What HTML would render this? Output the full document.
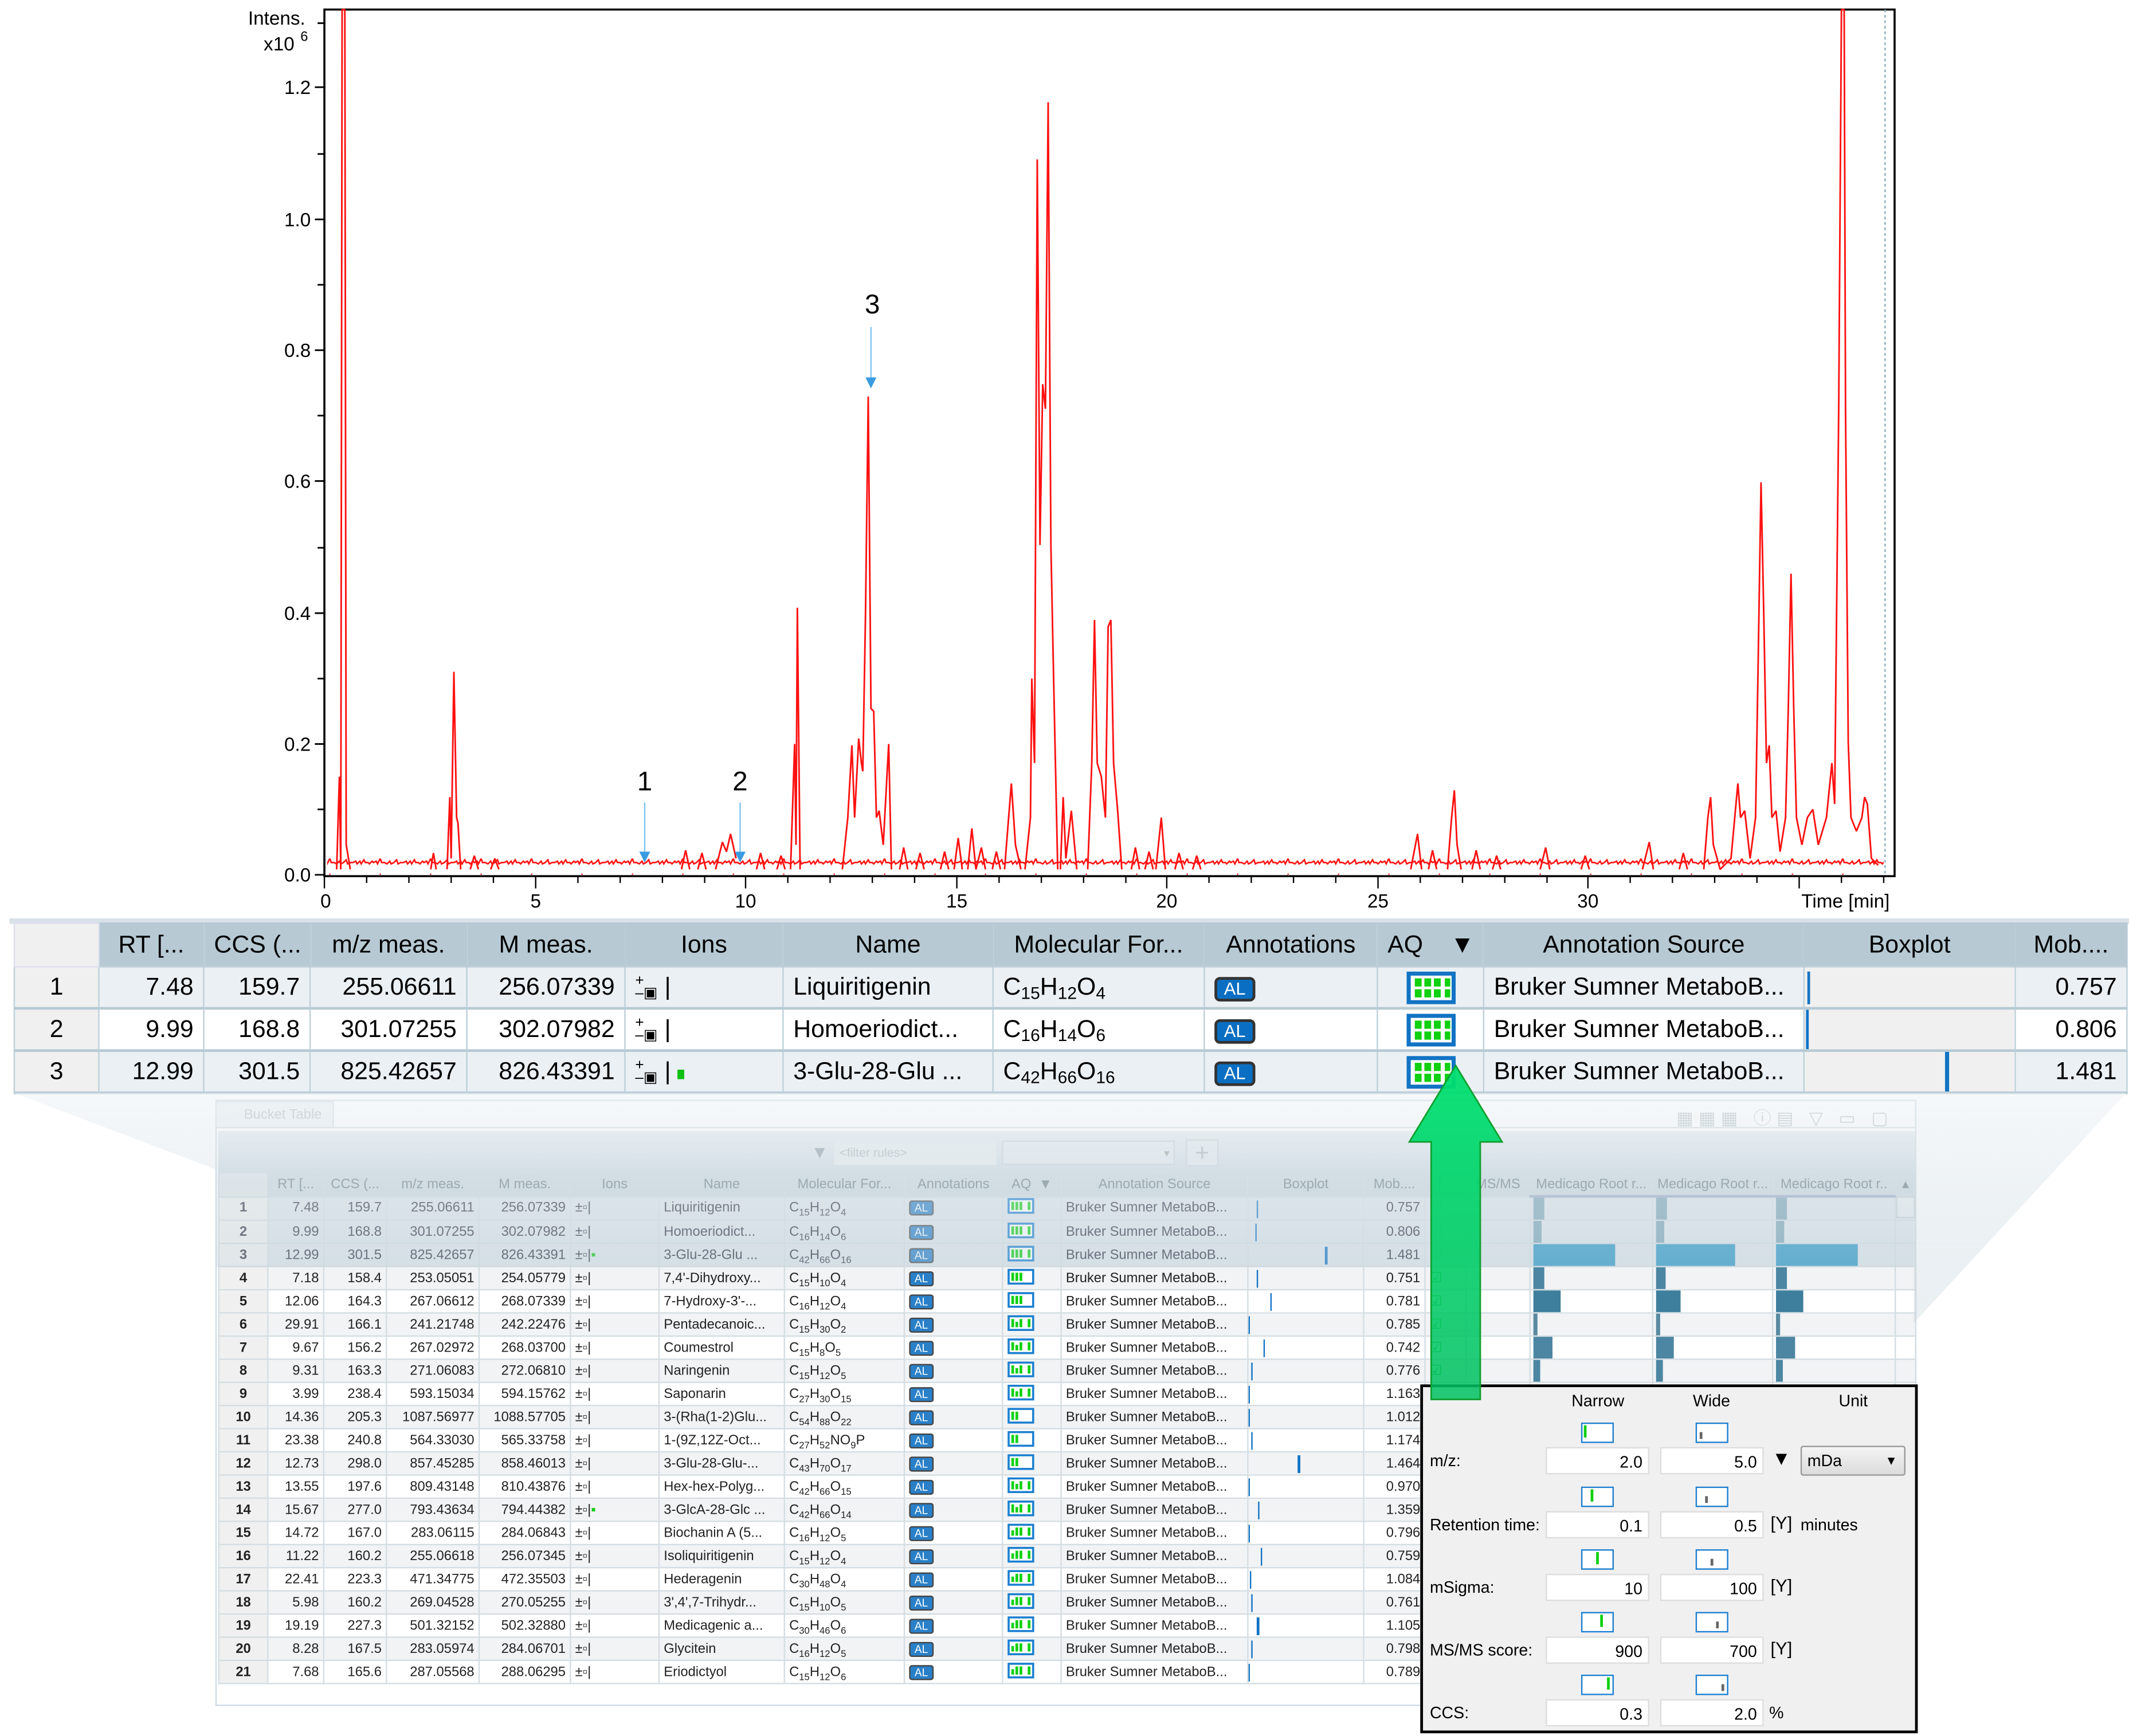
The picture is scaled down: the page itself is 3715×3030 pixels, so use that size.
<!DOCTYPE html>
<html><head><meta charset="utf-8">
<style>
html,body{margin:0;padding:0;background:#fff;}
body{width:3715px;height:3030px;overflow:hidden;}
#s{position:absolute;left:0;top:0;width:1562px;height:1274px;transform:scale(2.3784,2.3783);transform-origin:0 0;font-family:"Liberation Sans",sans-serif;color:#000;}
.abs{position:absolute;}
table{border-collapse:collapse;table-layout:fixed;}
#bt td,#bt th{font-weight:normal;font-size:18px;height:29px;padding:0 7px;border:1px solid #bccfd9;white-space:nowrap;overflow:hidden;}
#bt th{background:#b7cad4;text-align:center;border-color:#b7cad4;height:31px;}
#bt td{text-align:right;border-bottom:2px solid #b7cad4;}
#bt td.l{text-align:left;}
#bt td.c{text-align:center;}
#bt tr.a td{background:#ebf0f4;}
#bt tr.b td{background:#fff;}
#bt td.ix{background:#f0f0f0 !important;text-align:center;}
#bt td.bx{background:#f0f0f0 !important;position:relative;}
sub{font-size:70%;vertical-align:-3px;line-height:0;}
#st td,#st th{font-weight:normal;font-size:10px;height:16px;padding:0 3px;border:1px solid #d4dde2;white-space:nowrap;overflow:hidden;color:#222;}
#st th{background:#cbd7de;color:#6a7a84;text-align:center;height:16px;border-color:#cbd7de;}
#st td{text-align:right;}
#st td.l{text-align:left;}
#st tr:nth-child(odd) td{background:#f1f3f5;}
#st tr:nth-child(even) td{background:#fff;}
#st tr.sel td{background:#dde5ea;color:#334;}
#st td.ix{background:#f0f0f0 !important;text-align:center;font-weight:bold;color:#222;}
#st td.bx{position:relative;}
.al{display:inline-block;background:#0a6fc2;color:#fff;border:2px solid #333;border-radius:4px;font-size:13px;line-height:14px;padding:0 5px;}
.als{display:inline-block;background:#2a80c8;color:#fff;border:1px solid #444;border-radius:2px;font-size:8px;line-height:9px;padding:0 3px;}
.aq{display:inline-block;vertical-align:middle;}
.ion{display:inline-block;font-size:11px;line-height:9px;vertical-align:middle;}
.inp{position:absolute;background:#fff;border:1px solid #ddd;height:20px;font-size:12px;text-align:right;line-height:20px;padding-right:4px;box-sizing:border-box;}
.lab{position:absolute;font-size:12px;}
.ic{position:absolute;width:22px;height:13px;border:1.5px solid #1b7fd0;background:#fff;}
</style></head><body>
<div id="s">
<svg class="abs" style="left:0;top:0" width="1562" height="672" viewBox="0 0 1562 672">
<defs>
<pattern id="nz" x="0" y="0" width="37" height="12" patternUnits="userSpaceOnUse">
<path d="M0,9 L2,8 L3,10 L5,8 L6,10 L8,7 L9,9 L11,9 L12,10 L14,8 L15,9 L17,8 L18,10 L20,6 L21,9 L23,9 L25,10 L27,8 L28,10 L30,9 L32,7 L33,10 L35,9 L37,9" fill="none" stroke="#ff1010" stroke-width="1.1"/>
</pattern>
</defs>
<rect x="238" y="7" width="1152" height="636" fill="none" stroke="#000" stroke-width="1.5"/>
<line x1="1383" y1="7" x2="1383" y2="643" stroke="#8ab" stroke-dasharray="2,2"/>
<g stroke="#000" stroke-width="1.2">
<line x1="231" y1="642" x2="238" y2="642"/><line x1="231" y1="546" x2="238" y2="546"/><line x1="231" y1="450" x2="238" y2="450"/><line x1="231" y1="353" x2="238" y2="353"/><line x1="231" y1="257" x2="238" y2="257"/><line x1="231" y1="161" x2="238" y2="161"/><line x1="231" y1="64" x2="238" y2="64"/>
<line x1="233" y1="594" x2="238" y2="594"/><line x1="233" y1="498" x2="238" y2="498"/><line x1="233" y1="402" x2="238" y2="402"/><line x1="233" y1="305" x2="238" y2="305"/><line x1="233" y1="209" x2="238" y2="209"/><line x1="233" y1="113" x2="238" y2="113"/><line x1="233" y1="17" x2="238" y2="17"/>
</g>
<g stroke="#000" stroke-width="1">
<path d="M238,643v9M269,643v5M300,643v5M331,643v5M362,643v5M393,643v9M424,643v5M455,643v5M486,643v5M517,643v5M547,643v9M578,643v5M609,643v5M640,643v5M671,643v5M702,643v9M733,643v5M764,643v5M795,643v5M826,643v5M856,643v9M887,643v5M918,643v5M949,643v5M980,643v5M1011,643v9M1042,643v5M1073,643v5M1104,643v5M1135,643v5M1165,643v9M1196,643v5M1227,643v5M1258,643v5M1289,643v5M1320,643v9M1351,643v5M1382,643v5"/>
</g>
<g font-size="14" text-anchor="end">
<text x="228" y="647">0.0</text><text x="228" y="551">0.2</text><text x="228" y="455">0.4</text><text x="228" y="358">0.6</text><text x="228" y="262">0.8</text><text x="228" y="166">1.0</text><text x="228" y="69">1.2</text>
<text x="224" y="18">Intens.</text><text x="216" y="37">x10</text><text x="226" y="30" font-size="10">6</text>
</g>
<g font-size="14" text-anchor="middle">
<text x="239" y="666">0</text><text x="393" y="666">5</text><text x="547" y="666">10</text><text x="702" y="666">15</text><text x="856" y="666">20</text><text x="1011" y="666">25</text><text x="1165" y="666">30</text>
<text x="1354" y="666">Time [min]</text>
</g>
<rect x="240" y="630" width="1142" height="12" fill="url(#nz)"/>
<path fill="none" stroke="#ff1010" stroke-width="1.2" stroke-linejoin="bevel" d="
M247,638 L249,570 L250,638 L251,7 L253,7 L254,620 L257,638
M328,638 L330,585 L331,630 L333,493 L335,600 L336,604 L338,638
M580,638 L583,546 L584,620 L585,446 L587,638
M618,638 L622,600 L625,547 L627,600 L630,542 L632,560 L633,566 L635,450 L637,291 L639,520 L641,522 L643,600 L645,595 L648,620 L652,546 L654,638
M737,638 L740,600 L742,575 L745,620 L749,638
M752,638 L756,600 L757,498 L759,560 L761,117 L763,400 L765,282 L767,300 L769,75 L771,400 L773,498 L776,638
M778,638 L780,585 L782,630 L786,595 L790,638
M798,638 L801,560 L803,455 L805,560 L808,570 L811,600 L813,460 L815,455 L817,560 L820,595 L823,638
M848,638 L852,600 L855,638
M1062,638 L1065,600 L1067,580 L1069,620 L1072,638
M1250,638 L1253,600 L1255,585 L1257,620 L1262,638 L1270,630 L1275,575 L1277,600 L1280,595 L1284,630 L1288,600 L1290,480 L1292,354 L1294,450 L1296,560 L1298,547 L1300,600 L1303,595 L1306,625 L1310,600 L1312,520 L1314,421 L1316,520 L1318,600 L1322,620 L1326,600 L1330,594 L1334,620 L1340,600 L1344,560 L1346,590 L1349,300 L1351,7 L1353,7 L1354,300 L1356,545 L1358,600 L1362,610 L1366,600 L1368,585 L1370,590 L1373,630 L1378,635
M525,638 L530,618 L533,625 L536,612 L540,630
M316,638 L318,626 L320,638 M345,638 L348,628 L351,638 M360,638 L363,630 L366,638
M500,638 L503,624 L506,638 M512,638 L515,626 L518,638 M555,638 L558,626 L561,638 M570,638 L573,628 L576,638
M660,638 L663,622 L666,638 M672,638 L675,626 L678,638 M690,638 L693,625 L696,638
M700,638 L703,615 L706,638 M710,638 L713,608 L716,638 L720,622 L723,638 M728,638 L731,625 L734,638
M830,638 L833,622 L836,638 M840,638 L843,625 L846,638 M862,638 L865,626 L868,638 M875,638 L878,628 L881,638
M1035,638 L1040,612 L1043,638 M1048,638 L1051,624 L1054,638 M1080,638 L1083,624 L1086,638 M1095,638 L1098,628 L1101,638
M1130,638 L1134,622 L1137,638 M1160,638 L1163,628 L1166,638 M1205,638 L1210,618 L1213,638 M1232,638 L1235,626 L1238,638"/>
<g fill="#3a9be0" stroke="#7cc3f0">
<line x1="639" y1="240" x2="639" y2="278" stroke-width="1"/><path d="M635,277 L643,277 L639,285 Z" stroke="none"/>
<line x1="473" y1="589" x2="473" y2="626" stroke-width="1"/><path d="M469,625 L477,625 L473,633 Z" stroke="none"/>
<line x1="543" y1="589" x2="543" y2="626" stroke-width="1"/><path d="M539,625 L547,625 L543,633 Z" stroke="none"/>
</g>
<g font-size="20" text-anchor="middle"><text x="640" y="230">3</text><text x="473" y="580">1</text><text x="543" y="580">2</text></g>
</svg>

<div class="abs" style="left:7px;top:674px;width:1555px;height:4px;background:#d8e2e8"></div>
<table id="bt" class="abs" style="left:10px;top:677px;width:1550px;">
<colgroup><col style="width:62px"><col style="width:77px"><col style="width:78px"><col style="width:115px"><col style="width:116px"><col style="width:116px"><col style="width:154px"><col style="width:155px"><col style="width:127px"><col style="width:78px"><col style="width:235px"><col style="width:155px"><col style="width:82px"></colgroup>
<tr><th style="background:#f0f0f0;border-color:#dde"></th><th>RT [...</th><th>CCS (...</th><th>m/z meas.</th><th>M meas.</th><th>Ions</th><th>Name</th><th>Molecular For...</th><th>Annotations</th><th style="text-align:left">AQ &nbsp;&nbsp;&nbsp;&#9660;</th><th>Annotation Source</th><th>Boxplot</th><th>Mob....</th></tr>
<tr class="a"><td class="ix">1</td><td>7.48</td><td>159.7</td><td>255.06611</td><td>256.07339</td><td class="l"><span class="ion">+<br>–&#9635;</span> |</td><td class="l">Liquiritigenin</td><td class="l">C<sub>15</sub>H<sub>12</sub>O<sub>4</sub></td><td class="l"><span class="al">AL</span></td><td class="c"><svg class="aq" width="36" height="24"><rect x="1.5" y="1.5" width="33" height="21" fill="#fff" stroke="#1173c4" stroke-width="3"/><g fill="#10d010"><rect x="6" y="5" width="5" height="6"/><rect x="13" y="5" width="5" height="6"/><rect x="20" y="5" width="5" height="6"/><rect x="28" y="5" width="4" height="6"/><rect x="6" y="13" width="5" height="6"/><rect x="13" y="13" width="5" height="6"/><rect x="20" y="13" width="5" height="6"/><rect x="28" y="13" width="4" height="6"/></g></svg></td><td class="l">Bruker Sumner MetaboB...</td><td class="bx"><div class="abs" style="left:2px;top:3px;width:2px;height:24px;background:#1173c4"></div></td><td>0.757</td></tr>
<tr class="b"><td class="ix">2</td><td>9.99</td><td>168.8</td><td>301.07255</td><td>302.07982</td><td class="l"><span class="ion">+<br>–&#9635;</span> |</td><td class="l">Homoeriodict...</td><td class="l">C<sub>16</sub>H<sub>14</sub>O<sub>6</sub></td><td class="l"><span class="al">AL</span></td><td class="c"><svg class="aq" width="36" height="24"><rect x="1.5" y="1.5" width="33" height="21" fill="#fff" stroke="#1173c4" stroke-width="3"/><g fill="#10d010"><rect x="6" y="5" width="5" height="6"/><rect x="13" y="5" width="5" height="6"/><rect x="20" y="5" width="5" height="6"/><rect x="28" y="5" width="4" height="6"/><rect x="6" y="13" width="5" height="6"/><rect x="13" y="13" width="5" height="6"/><rect x="20" y="13" width="5" height="6"/><rect x="28" y="13" width="4" height="6"/></g></svg></td><td class="l">Bruker Sumner MetaboB...</td><td class="bx"><div class="abs" style="left:1px;top:0;width:2px;height:29px;background:#1173c4"></div></td><td>0.806</td></tr>
<tr class="a"><td class="ix">3</td><td>12.99</td><td>301.5</td><td>825.42657</td><td>826.43391</td><td class="l"><span class="ion">+<br>–&#9635;</span> | <span style="display:inline-block;width:5px;height:7px;background:#10c010"></span></td><td class="l">3-Glu-28-Glu ...</td><td class="l">C<sub>42</sub>H<sub>66</sub>O<sub>16</sub></td><td class="l"><span class="al">AL</span></td><td class="c"><svg class="aq" width="36" height="24"><rect x="1.5" y="1.5" width="33" height="21" fill="#fff" stroke="#1173c4" stroke-width="3"/><g fill="#10d010"><rect x="6" y="5" width="5" height="6"/><rect x="13" y="5" width="5" height="6"/><rect x="20" y="5" width="5" height="6"/><rect x="28" y="5" width="4" height="6"/><rect x="6" y="13" width="5" height="6"/><rect x="13" y="13" width="5" height="6"/><rect x="20" y="13" width="5" height="6"/><rect x="28" y="13" width="4" height="6"/></g></svg></td><td class="l">Bruker Sumner MetaboB...</td><td class="bx"><div class="abs" style="left:103px;top:0;width:3px;height:29px;background:#1173c4"></div></td><td>1.481</td></tr>
</table>

<div class="abs" style="left:158px;top:807px;width:1248px;height:445px;background:#fff;border:1px solid #cfdbe3;box-sizing:border-box"></div>
<div class="abs" style="left:158px;top:808px;width:87px;height:20px;background:#eef2f5;border:1px solid #d6dee4;font-size:10px;color:#b5bcc2;line-height:20px;padding-left:20px;box-sizing:border-box">Bucket Table</div>
<div class="abs" style="left:245px;top:827px;width:1160px;height:1px;background:#d6dee4"></div>
<div class="abs" style="left:1230px;top:810px;font-size:13px;color:#b8c0c6;letter-spacing:4px">▦▦▦ ⓘ▤ ▽ ▭ ▢</div>
<div class="abs" style="left:160px;top:830px;width:1245px;height:30px;background:linear-gradient(#e5ecf0,#ccd9e0)"></div>
<div class="abs" style="left:595px;top:838px;font-size:13px;color:#8c9aa2">▼</div>
<div class="abs" style="left:612px;top:838px;width:115px;height:17px;background:#e6ecef;font-size:9px;color:#aab4ba;line-height:17px;padding-left:4px">&lt;filter rules&gt;</div>
<div class="abs" style="left:735px;top:837px;width:127px;height:18px;background:#e3e9ed;border:1px solid #c8d2d8;font-size:8px;color:#999;text-align:right;line-height:18px;padding-right:3px;box-sizing:border-box">▾</div>
<div class="abs" style="left:870px;top:836px;width:24px;height:20px;background:#e3e9ed;border:1px solid #c8d2d8;font-size:18px;color:#a9b3b9;text-align:center;line-height:19px;box-sizing:border-box">+</div>

<table id="st" class="abs" style="left:160px;top:860px;width:1245px;">
<colgroup><col style="width:36px"><col style="width:41px"><col style="width:46px"><col style="width:68px"><col style="width:67px"><col style="width:65px"><col style="width:92px"><col style="width:88px"><col style="width:72px"><col style="width:43px"><col style="width:137px"><col style="width:85px"><col style="width:45px"><col style="width:30px"><col style="width:47px"><col style="width:90px"><col style="width:88px"><col style="width:90px"><col style="width:15px"></colgroup>
<tr><th style="background:#dfe5e9"></th><th>RT [...</th><th>CCS (...</th><th>m/z meas.</th><th>M meas.</th><th>Ions</th><th>Name</th><th>Molecular For...</th><th>Annotations</th><th>AQ &nbsp;▼</th><th>Annotation Source</th><th>Boxplot</th><th>Mob....</th><th>I...</th><th>MS/MS</th><th style="border-bottom:2px solid #9eabc4">Medicago Root r...</th><th style="border-bottom:2px solid #9eabc4">Medicago Root r...</th><th style="border-bottom:2px solid #9eabc4">Medicago Root r..</th><th>▴</th></tr>
<tr class="sel"><td class="ix">1</td><td>7.48</td><td>159.7</td><td>255.06611</td><td>256.07339</td><td class="l">±▫|</td><td class="l">Liquiritigenin</td><td class="l">C<sub>15</sub>H<sub>12</sub>O<sub>4</sub></td><td class="l"><span class="als">AL</span></td><td class="l"><svg width="20" height="12"><rect x="1" y="1" width="18" height="10" fill="#fff" stroke="#1b7fd0" stroke-width="1.5"/><path d="M4,3v6M7,3v6M10,3v6M16,3v6" stroke="#10d010" stroke-width="2"/></svg></td><td class="l">Bruker Sumner MetaboB...</td><td class="bx"><div class="abs" style="left:6px;top:2px;width:1px;height:13px;background:#1173c4"></div></td><td>0.757</td><td class="l" style="color:#7d7">☑</td><td></td><td class="bx"><div class="abs" style="left:2px;top:0;width:8px;height:17px;background:#7fa6b8"></div></td><td class="bx"><div class="abs" style="left:2px;top:0;width:8px;height:17px;background:#7fa6b8"></div></td><td class="bx"><div class="abs" style="left:2px;top:0;width:8px;height:17px;background:#7fa6b8"></div></td><td></td></tr>
<tr class="sel"><td class="ix">2</td><td>9.99</td><td>168.8</td><td>301.07255</td><td>302.07982</td><td class="l">±▫|</td><td class="l">Homoeriodict...</td><td class="l">C<sub>16</sub>H<sub>14</sub>O<sub>6</sub></td><td class="l"><span class="als">AL</span></td><td class="l"><svg width="20" height="12"><rect x="1" y="1" width="18" height="10" fill="#fff" stroke="#1b7fd0" stroke-width="1.5"/><path d="M4,3v6M7,3v6M10,3v6M16,3v6" stroke="#10d010" stroke-width="2"/></svg></td><td class="l">Bruker Sumner MetaboB...</td><td class="bx"><div class="abs" style="left:5px;top:2px;width:1px;height:13px;background:#1173c4"></div></td><td>0.806</td><td class="l" style="color:#7d7">☑</td><td></td><td class="bx"><div class="abs" style="left:2px;top:0;width:6px;height:17px;background:#7fa6b8"></div></td><td class="bx"><div class="abs" style="left:2px;top:0;width:6px;height:17px;background:#7fa6b8"></div></td><td class="bx"><div class="abs" style="left:2px;top:0;width:6px;height:17px;background:#7fa6b8"></div></td><td></td></tr>
<tr class="sel"><td class="ix">3</td><td>12.99</td><td>301.5</td><td>825.42657</td><td>826.43391</td><td class="l">±▫|<span style="color:#1c1">▪</span></td><td class="l">3-Glu-28-Glu ...</td><td class="l">C<sub>42</sub>H<sub>66</sub>O<sub>16</sub></td><td class="l"><span class="als">AL</span></td><td class="l"><svg width="20" height="12"><rect x="1" y="1" width="18" height="10" fill="#fff" stroke="#1b7fd0" stroke-width="1.5"/><path d="M4,3v6M7,3v6M10,3v6M16,3v6" stroke="#10d010" stroke-width="2"/></svg></td><td class="l">Bruker Sumner MetaboB...</td><td class="bx"><div class="abs" style="left:56px;top:2px;width:2px;height:13px;background:#1173c4"></div></td><td>1.481</td><td class="l" style="color:#7d7">☑</td><td></td><td class="bx"><div class="abs" style="left:2px;top:0;width:60px;height:17px;background:#2f98c6"></div></td><td class="bx"><div class="abs" style="left:2px;top:0;width:58px;height:17px;background:#2f98c6"></div></td><td class="bx"><div class="abs" style="left:2px;top:0;width:60px;height:17px;background:#2f98c6"></div></td><td></td></tr>
<tr><td class="ix">4</td><td>7.18</td><td>158.4</td><td>253.05051</td><td>254.05779</td><td class="l">±▫|</td><td class="l">7,4'-Dihydroxy...</td><td class="l">C<sub>15</sub>H<sub>10</sub>O<sub>4</sub></td><td class="l"><span class="als">AL</span></td><td class="l"><svg width="20" height="12"><rect x="1" y="1" width="18" height="10" fill="#fff" stroke="#1b7fd0" stroke-width="1.5"/><path d="M4,3v6M7,3v6M10,3v6" stroke="#10d010" stroke-width="2"/></svg></td><td class="l">Bruker Sumner MetaboB...</td><td class="bx"><div class="abs" style="left:6px;top:2px;width:1px;height:13px;background:#1173c4"></div></td><td>0.751</td><td class="l" style="color:#1a1">☑</td><td></td><td class="bx"><div class="abs" style="left:2px;top:0;width:8px;height:17px;background:#4c86a2"></div></td><td class="bx"><div class="abs" style="left:2px;top:0;width:7px;height:17px;background:#4c86a2"></div></td><td class="bx"><div class="abs" style="left:2px;top:0;width:8px;height:17px;background:#4c86a2"></div></td><td></td></tr>
<tr><td class="ix">5</td><td>12.06</td><td>164.3</td><td>267.06612</td><td>268.07339</td><td class="l">±▫|</td><td class="l">7-Hydroxy-3'-...</td><td class="l">C<sub>16</sub>H<sub>12</sub>O<sub>4</sub></td><td class="l"><span class="als">AL</span></td><td class="l"><svg width="20" height="12"><rect x="1" y="1" width="18" height="10" fill="#fff" stroke="#1b7fd0" stroke-width="1.5"/><path d="M4,3v6M7,3v6M10,3v6" stroke="#10d010" stroke-width="2"/></svg></td><td class="l">Bruker Sumner MetaboB...</td><td class="bx"><div class="abs" style="left:16px;top:2px;width:1px;height:13px;background:#1173c4"></div></td><td>0.781</td><td class="l" style="color:#1a1">☑</td><td></td><td class="bx"><div class="abs" style="left:2px;top:0;width:20px;height:17px;background:#3e7f9e"></div></td><td class="bx"><div class="abs" style="left:2px;top:0;width:18px;height:17px;background:#3e7f9e"></div></td><td class="bx"><div class="abs" style="left:2px;top:0;width:20px;height:17px;background:#3e7f9e"></div></td><td></td></tr>
<tr><td class="ix">6</td><td>29.91</td><td>166.1</td><td>241.21748</td><td>242.22476</td><td class="l">±▫|</td><td class="l">Pentadecanoic...</td><td class="l">C<sub>15</sub>H<sub>30</sub>O<sub>2</sub></td><td class="l"><span class="als">AL</span></td><td class="l"><svg width="20" height="12"><rect x="1" y="1" width="18" height="10" fill="#fff" stroke="#1b7fd0" stroke-width="1.5"/><path d="M4,3v6M7,5v4M10,3v6M16,3v6" stroke="#10d010" stroke-width="2"/></svg></td><td class="l">Bruker Sumner MetaboB...</td><td class="bx"><div class="abs" style="left:0px;top:2px;width:1px;height:13px;background:#1173c4"></div></td><td>0.785</td><td class="l" style="color:#1a1">☑</td><td></td><td class="bx"><div class="abs" style="left:2px;top:0;width:3px;height:17px;background:#5a8aa2"></div></td><td class="bx"><div class="abs" style="left:2px;top:0;width:3px;height:17px;background:#5a8aa2"></div></td><td class="bx"><div class="abs" style="left:2px;top:0;width:3px;height:17px;background:#5a8aa2"></div></td><td></td></tr>
<tr><td class="ix">7</td><td>9.67</td><td>156.2</td><td>267.02972</td><td>268.03700</td><td class="l">±▫|</td><td class="l">Coumestrol</td><td class="l">C<sub>15</sub>H<sub>8</sub>O<sub>5</sub></td><td class="l"><span class="als">AL</span></td><td class="l"><svg width="20" height="12"><rect x="1" y="1" width="18" height="10" fill="#fff" stroke="#1b7fd0" stroke-width="1.5"/><path d="M4,3v6M7,5v4M10,3v6M16,3v6" stroke="#10d010" stroke-width="2"/></svg></td><td class="l">Bruker Sumner MetaboB...</td><td class="bx"><div class="abs" style="left:11px;top:2px;width:1px;height:13px;background:#1173c4"></div></td><td>0.742</td><td class="l" style="color:#1a1">☑</td><td></td><td class="bx"><div class="abs" style="left:2px;top:0;width:14px;height:17px;background:#4c86a2"></div></td><td class="bx"><div class="abs" style="left:2px;top:0;width:13px;height:17px;background:#4c86a2"></div></td><td class="bx"><div class="abs" style="left:2px;top:0;width:14px;height:17px;background:#4c86a2"></div></td><td></td></tr>
<tr><td class="ix">8</td><td>9.31</td><td>163.3</td><td>271.06083</td><td>272.06810</td><td class="l">±▫|</td><td class="l">Naringenin</td><td class="l">C<sub>15</sub>H<sub>12</sub>O<sub>5</sub></td><td class="l"><span class="als">AL</span></td><td class="l"><svg width="20" height="12"><rect x="1" y="1" width="18" height="10" fill="#fff" stroke="#1b7fd0" stroke-width="1.5"/><path d="M4,3v6M7,5v4M10,3v6M16,3v6" stroke="#10d010" stroke-width="2"/></svg></td><td class="l">Bruker Sumner MetaboB...</td><td class="bx"><div class="abs" style="left:2px;top:2px;width:1px;height:13px;background:#1173c4"></div></td><td>0.776</td><td class="l" style="color:#1a1">☑</td><td></td><td class="bx"><div class="abs" style="left:2px;top:0;width:5px;height:17px;background:#4c86a2"></div></td><td class="bx"><div class="abs" style="left:2px;top:0;width:5px;height:17px;background:#4c86a2"></div></td><td class="bx"><div class="abs" style="left:2px;top:0;width:5px;height:17px;background:#4c86a2"></div></td><td></td></tr>
<tr><td class="ix">9</td><td>3.99</td><td>238.4</td><td>593.15034</td><td>594.15762</td><td class="l">±▫|</td><td class="l">Saponarin</td><td class="l">C<sub>27</sub>H<sub>30</sub>O<sub>15</sub></td><td class="l"><span class="als">AL</span></td><td class="l"><svg width="20" height="12"><rect x="1" y="1" width="18" height="10" fill="#fff" stroke="#1b7fd0" stroke-width="1.5"/><path d="M4,3v6M7,5v4M10,3v6M16,3v6" stroke="#10d010" stroke-width="2"/></svg></td><td class="l">Bruker Sumner MetaboB...</td><td class="bx"><div class="abs" style="left:0px;top:2px;width:1px;height:13px;background:#1173c4"></div></td><td>1.163</td><td></td><td></td><td></td><td></td><td></td><td></td></tr>
<tr><td class="ix">10</td><td>14.36</td><td>205.3</td><td>1087.56977</td><td>1088.57705</td><td class="l">±▫|</td><td class="l">3-(Rha(1-2)Glu...</td><td class="l">C<sub>54</sub>H<sub>88</sub>O<sub>22</sub></td><td class="l"><span class="als">AL</span></td><td class="l"><svg width="20" height="12"><rect x="1" y="1" width="18" height="10" fill="#fff" stroke="#1b7fd0" stroke-width="1.5"/><path d="M4,3v6M7,3v6" stroke="#10d010" stroke-width="2"/></svg></td><td class="l">Bruker Sumner MetaboB...</td><td class="bx"><div class="abs" style="left:0px;top:2px;width:1px;height:13px;background:#1173c4"></div></td><td>1.012</td><td></td><td></td><td></td><td></td><td></td><td></td></tr>
<tr><td class="ix">11</td><td>23.38</td><td>240.8</td><td>564.33030</td><td>565.33758</td><td class="l">±▫|</td><td class="l">1-(9Z,12Z-Oct...</td><td class="l">C<sub>27</sub>H<sub>52</sub>NO<sub>9</sub>P</td><td class="l"><span class="als">AL</span></td><td class="l"><svg width="20" height="12"><rect x="1" y="1" width="18" height="10" fill="#fff" stroke="#1b7fd0" stroke-width="1.5"/><path d="M4,3v6M7,3v6" stroke="#10d010" stroke-width="2"/></svg></td><td class="l">Bruker Sumner MetaboB...</td><td class="bx"><div class="abs" style="left:2px;top:2px;width:1px;height:13px;background:#1173c4"></div></td><td>1.174</td><td></td><td></td><td></td><td></td><td></td><td></td></tr>
<tr><td class="ix">12</td><td>12.73</td><td>298.0</td><td>857.45285</td><td>858.46013</td><td class="l">±▫|</td><td class="l">3-Glu-28-Glu-...</td><td class="l">C<sub>43</sub>H<sub>70</sub>O<sub>17</sub></td><td class="l"><span class="als">AL</span></td><td class="l"><svg width="20" height="12"><rect x="1" y="1" width="18" height="10" fill="#fff" stroke="#1b7fd0" stroke-width="1.5"/><path d="M4,3v6M7,3v6" stroke="#10d010" stroke-width="2"/></svg></td><td class="l">Bruker Sumner MetaboB...</td><td class="bx"><div class="abs" style="left:36px;top:2px;width:2px;height:13px;background:#1173c4"></div></td><td>1.464</td><td></td><td></td><td></td><td></td><td></td><td></td></tr>
<tr><td class="ix">13</td><td>13.55</td><td>197.6</td><td>809.43148</td><td>810.43876</td><td class="l">±▫|</td><td class="l">Hex-hex-Polyg...</td><td class="l">C<sub>42</sub>H<sub>66</sub>O<sub>15</sub></td><td class="l"><span class="als">AL</span></td><td class="l"><svg width="20" height="12"><rect x="1" y="1" width="18" height="10" fill="#fff" stroke="#1b7fd0" stroke-width="1.5"/><path d="M4,3v6M7,5v4M10,3v6M16,3v6" stroke="#10d010" stroke-width="2"/></svg></td><td class="l">Bruker Sumner MetaboB...</td><td class="bx"><div class="abs" style="left:0px;top:2px;width:1px;height:13px;background:#1173c4"></div></td><td>0.970</td><td></td><td></td><td></td><td></td><td></td><td></td></tr>
<tr><td class="ix">14</td><td>15.67</td><td>277.0</td><td>793.43634</td><td>794.44382</td><td class="l">±▫|<span style="color:#1c1">▪</span></td><td class="l">3-GlcA-28-Glc ...</td><td class="l">C<sub>42</sub>H<sub>66</sub>O<sub>14</sub></td><td class="l"><span class="als">AL</span></td><td class="l"><svg width="20" height="12"><rect x="1" y="1" width="18" height="10" fill="#fff" stroke="#1b7fd0" stroke-width="1.5"/><path d="M4,3v6M7,5v4M10,3v6M16,3v6" stroke="#10d010" stroke-width="2"/></svg></td><td class="l">Bruker Sumner MetaboB...</td><td class="bx"><div class="abs" style="left:7px;top:2px;width:1px;height:13px;background:#1173c4"></div></td><td>1.359</td><td></td><td></td><td></td><td></td><td></td><td></td></tr>
<tr><td class="ix">15</td><td>14.72</td><td>167.0</td><td>283.06115</td><td>284.06843</td><td class="l">±▫|</td><td class="l">Biochanin A (5...</td><td class="l">C<sub>16</sub>H<sub>12</sub>O<sub>5</sub></td><td class="l"><span class="als">AL</span></td><td class="l"><svg width="20" height="12"><rect x="1" y="1" width="18" height="10" fill="#fff" stroke="#1b7fd0" stroke-width="1.5"/><path d="M4,5v4M7,3v6M10,3v6M16,3v6" stroke="#10d010" stroke-width="2"/></svg></td><td class="l">Bruker Sumner MetaboB...</td><td class="bx"><div class="abs" style="left:0px;top:2px;width:1px;height:13px;background:#1173c4"></div></td><td>0.796</td><td></td><td></td><td></td><td></td><td></td><td></td></tr>
<tr><td class="ix">16</td><td>11.22</td><td>160.2</td><td>255.06618</td><td>256.07345</td><td class="l">±▫|</td><td class="l">Isoliquiritigenin</td><td class="l">C<sub>15</sub>H<sub>12</sub>O<sub>4</sub></td><td class="l"><span class="als">AL</span></td><td class="l"><svg width="20" height="12"><rect x="1" y="1" width="18" height="10" fill="#fff" stroke="#1b7fd0" stroke-width="1.5"/><path d="M4,5v4M7,3v6M10,3v6M16,3v6" stroke="#10d010" stroke-width="2"/></svg></td><td class="l">Bruker Sumner MetaboB...</td><td class="bx"><div class="abs" style="left:9px;top:2px;width:1px;height:13px;background:#1173c4"></div></td><td>0.759</td><td></td><td></td><td></td><td></td><td></td><td></td></tr>
<tr><td class="ix">17</td><td>22.41</td><td>223.3</td><td>471.34775</td><td>472.35503</td><td class="l">±▫|</td><td class="l">Hederagenin</td><td class="l">C<sub>30</sub>H<sub>48</sub>O<sub>4</sub></td><td class="l"><span class="als">AL</span></td><td class="l"><svg width="20" height="12"><rect x="1" y="1" width="18" height="10" fill="#fff" stroke="#1b7fd0" stroke-width="1.5"/><path d="M4,5v4M7,3v6M10,3v6M16,3v6" stroke="#10d010" stroke-width="2"/></svg></td><td class="l">Bruker Sumner MetaboB...</td><td class="bx"><div class="abs" style="left:1px;top:2px;width:1px;height:13px;background:#1173c4"></div></td><td>1.084</td><td></td><td></td><td></td><td></td><td></td><td></td></tr>
<tr><td class="ix">18</td><td>5.98</td><td>160.2</td><td>269.04528</td><td>270.05255</td><td class="l">±▫|</td><td class="l">3',4',7-Trihydr...</td><td class="l">C<sub>15</sub>H<sub>10</sub>O<sub>5</sub></td><td class="l"><span class="als">AL</span></td><td class="l"><svg width="20" height="12"><rect x="1" y="1" width="18" height="10" fill="#fff" stroke="#1b7fd0" stroke-width="1.5"/><path d="M4,5v4M7,3v6M10,3v6M16,3v6" stroke="#10d010" stroke-width="2"/></svg></td><td class="l">Bruker Sumner MetaboB...</td><td class="bx"><div class="abs" style="left:2px;top:2px;width:1px;height:13px;background:#1173c4"></div></td><td>0.761</td><td></td><td></td><td></td><td></td><td></td><td></td></tr>
<tr><td class="ix">19</td><td>19.19</td><td>227.3</td><td>501.32152</td><td>502.32880</td><td class="l">±▫|</td><td class="l">Medicagenic a...</td><td class="l">C<sub>30</sub>H<sub>46</sub>O<sub>6</sub></td><td class="l"><span class="als">AL</span></td><td class="l"><svg width="20" height="12"><rect x="1" y="1" width="18" height="10" fill="#fff" stroke="#1b7fd0" stroke-width="1.5"/><path d="M4,5v4M7,3v6M10,3v6M16,3v6" stroke="#10d010" stroke-width="2"/></svg></td><td class="l">Bruker Sumner MetaboB...</td><td class="bx"><div class="abs" style="left:6px;top:2px;width:2px;height:13px;background:#1173c4"></div></td><td>1.105</td><td></td><td></td><td></td><td></td><td></td><td></td></tr>
<tr><td class="ix">20</td><td>8.28</td><td>167.5</td><td>283.05974</td><td>284.06701</td><td class="l">±▫|</td><td class="l">Glycitein</td><td class="l">C<sub>16</sub>H<sub>12</sub>O<sub>5</sub></td><td class="l"><span class="als">AL</span></td><td class="l"><svg width="20" height="12"><rect x="1" y="1" width="18" height="10" fill="#fff" stroke="#1b7fd0" stroke-width="1.5"/><path d="M4,5v4M7,3v6M10,3v6M16,3v6" stroke="#10d010" stroke-width="2"/></svg></td><td class="l">Bruker Sumner MetaboB...</td><td class="bx"><div class="abs" style="left:2px;top:2px;width:1px;height:13px;background:#1173c4"></div></td><td>0.798</td><td></td><td></td><td></td><td></td><td></td><td></td></tr>
<tr><td class="ix">21</td><td>7.68</td><td>165.6</td><td>287.05568</td><td>288.06295</td><td class="l">±▫|</td><td class="l">Eriodictyol</td><td class="l">C<sub>15</sub>H<sub>12</sub>O<sub>6</sub></td><td class="l"><span class="als">AL</span></td><td class="l"><svg width="20" height="12"><rect x="1" y="1" width="18" height="10" fill="#fff" stroke="#1b7fd0" stroke-width="1.5"/><path d="M4,5v4M7,3v6M10,3v6M16,3v6" stroke="#10d010" stroke-width="2"/></svg></td><td class="l">Bruker Sumner MetaboB...</td><td class="bx"><div class="abs" style="left:0px;top:2px;width:1px;height:13px;background:#1173c4"></div></td><td>0.789</td><td></td><td></td><td></td><td></td><td></td><td></td></tr>
</table>
<div class="abs" style="left:1391px;top:878px;width:12px;height:14px;background:#e8edf0;border:1px solid #c5cfd5"></div>

<svg class="abs" style="left:0;top:0" width="1562" height="1274">
<defs><linearGradient id="wg" x1="0" y1="0" x2="0" y2="1"><stop offset="0" stop-color="#eef3f6" stop-opacity="0.55"/><stop offset="1" stop-color="#b9ccd6" stop-opacity="0.3"/></linearGradient></defs>
<polygon points="10,802 1560,802 1404,971 1404,930 158,930 158,858" fill="url(#wg)"/>
</svg>

<div class="abs" style="left:1042px;top:1016px;width:365px;height:256px;background:#f0f0f0;border:2px solid #000;box-sizing:border-box"></div>
<div class="lab" style="left:1153px;top:1021px">Narrow</div>
<div class="lab" style="left:1242px;top:1021px">Wide</div>
<div class="lab" style="left:1349px;top:1021px">Unit</div>
<div class="ic" style="left:1160px;top:1044px"><div class="abs" style="left:1px;top:1px;width:2px;height:9px;background:#10d010"></div></div>
<div class="ic" style="left:1244px;top:1044px"><div class="abs" style="left:2px;top:6px;width:2px;height:5px;background:#666"></div></div>
<div class="ic" style="left:1160px;top:1091px"><div class="abs" style="left:6px;top:1px;width:2px;height:9px;background:#10d010"></div></div>
<div class="ic" style="left:1244px;top:1091px"><div class="abs" style="left:6px;top:6px;width:2px;height:5px;background:#666"></div></div>
<div class="ic" style="left:1160px;top:1137px"><div class="abs" style="left:10px;top:1px;width:2px;height:9px;background:#10d010"></div></div>
<div class="ic" style="left:1244px;top:1137px"><div class="abs" style="left:10px;top:6px;width:2px;height:5px;background:#666"></div></div>
<div class="ic" style="left:1160px;top:1183px"><div class="abs" style="left:13px;top:1px;width:2px;height:9px;background:#10d010"></div></div>
<div class="ic" style="left:1244px;top:1183px"><div class="abs" style="left:14px;top:6px;width:2px;height:5px;background:#666"></div></div>
<div class="ic" style="left:1160px;top:1229px"><div class="abs" style="left:18px;top:1px;width:2px;height:9px;background:#10d010"></div></div>
<div class="ic" style="left:1244px;top:1229px"><div class="abs" style="left:18px;top:6px;width:2px;height:5px;background:#666"></div></div>
<div class="lab" style="left:1049px;top:1065px">m/z:</div>
<div class="inp" style="left:1134px;top:1062px;width:76px">2.0</div>
<div class="inp" style="left:1218px;top:1062px;width:76px">5.0</div>
<div class="lab" style="left:1300px;top:1062px;font-size:14px">&#9660;</div>
<div class="abs" style="left:1321px;top:1061px;width:77px;height:22px;border:1px solid #999;border-radius:2px;background:linear-gradient(#f4f4f4,#dcdcdc);font-size:12px;line-height:21px;padding-left:4px;box-sizing:border-box">mDa<span style="position:absolute;right:5px;font-size:9px">&#9660;</span></div>
<div class="lab" style="left:1049px;top:1112px">Retention time:</div>
<div class="inp" style="left:1134px;top:1109px;width:76px">0.1</div>
<div class="inp" style="left:1218px;top:1109px;width:76px">0.5</div>
<div class="lab" style="left:1299px;top:1110px;font-size:13px">[&#933;]</div>
<div class="lab" style="left:1321px;top:1112px">minutes</div>
<div class="lab" style="left:1049px;top:1158px">mSigma:</div>
<div class="inp" style="left:1134px;top:1155px;width:76px">10</div>
<div class="inp" style="left:1218px;top:1155px;width:76px">100</div>
<div class="lab" style="left:1299px;top:1156px;font-size:13px">[&#933;]</div>
<div class="lab" style="left:1049px;top:1204px">MS/MS score:</div>
<div class="inp" style="left:1134px;top:1201px;width:76px">900</div>
<div class="inp" style="left:1218px;top:1201px;width:76px">700</div>
<div class="lab" style="left:1299px;top:1202px;font-size:13px">[&#933;]</div>
<div class="lab" style="left:1049px;top:1250px">CCS:</div>
<div class="inp" style="left:1134px;top:1247px;width:76px">0.3</div>
<div class="inp" style="left:1218px;top:1247px;width:76px">2.0</div>
<div class="lab" style="left:1298px;top:1250px">%</div>

<svg class="abs" style="left:0;top:0" width="1562" height="1274">
<defs><linearGradient id="ga" x1="0" y1="0" x2="0" y2="1"><stop offset="0" stop-color="#00e070" stop-opacity="0.95"/><stop offset="1" stop-color="#00c060" stop-opacity="0.85"/></linearGradient></defs>
<path d="M1068,782 L1102,838 L1086,838 L1086,1027 L1050,1027 L1050,838 L1034,838 Z" fill="url(#ga)" stroke="#10a030" stroke-width="1.2"/>
</svg>
</div>
</body></html>
